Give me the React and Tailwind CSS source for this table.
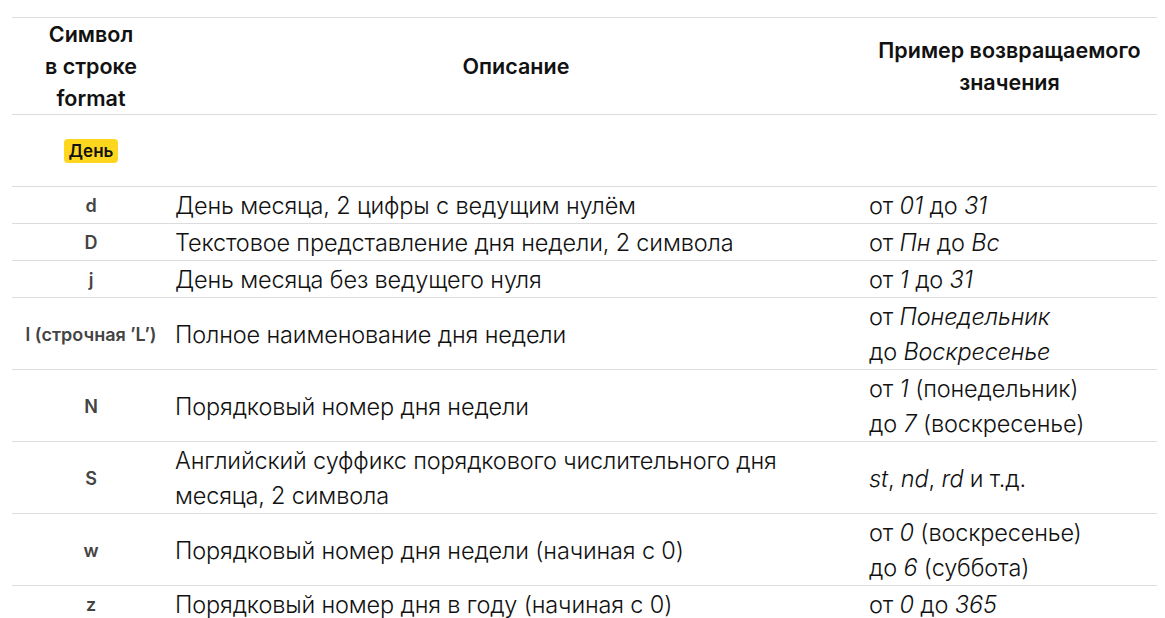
import React from 'react';

const rows = [
  { sym: 'd', desc: 'День месяца, 2 цифры с ведущим нулём', ex: [<>от <i>01</i> до <i>31</i></>] },
  { sym: 'D', desc: 'Текстовое представление дня недели, 2 символа', ex: [<>от <i>Пн</i> до <i>Вс</i></>] },
  { sym: 'j', desc: 'День месяца без ведущего нуля', ex: [<>от <i>1</i> до <i>31</i></>] },
  { sym: 'l (строчная ’L’)', desc: 'Полное наименование дня недели', ex: [<>от <i>Понедельник</i></>, <>до <i>Воскресенье</i></>] },
  { sym: 'N', desc: 'Порядковый номер дня недели', ex: [<>от <i>1</i> (понедельник)</>, <>до <i>7</i> (воскресенье)</>] },
  { sym: 'S', desc: 'Английский суффикс порядкового числительного дня месяца, 2 символа', ex: [<><i>st</i>, <i>nd</i>, <i>rd</i> и т.д.</>] },
  { sym: 'w', desc: 'Порядковый номер дня недели (начиная с 0)', ex: [<>от <i>0</i> (воскресенье)</>, <>до <i>6</i> (суббота)</>] },
  { sym: 'z', desc: 'Порядковый номер дня в году (начиная с 0)', ex: [<>от <i>0</i> до <i>365</i></>] },
];

export default function App() {
  return (
    <div className="bg-white min-h-screen pt-[17px] pl-[12px] font-['Inter',sans-serif]">
      <table className="w-[1145px] table-fixed border-collapse">
        <colgroup>
          <col className="w-[158px]" />
          <col className="w-[692px]" />
          <col className="w-[295px]" />
        </colgroup>
        <thead>
          <tr className="border-y border-[#dcdcdc]">
            <th className="h-[96px] text-[21.5px] leading-[32px] font-semibold text-[#111] text-center align-middle">
              Символ<br />в строке<br />format
            </th>
            <th className="text-[21.5px] leading-[32px] font-semibold text-[#111] text-center align-middle">Описание</th>
            <th className="text-[21.5px] leading-[32px] font-semibold text-[#111] text-center align-middle">
              Пример возвращаемого<br />значения
            </th>
          </tr>
        </thead>
        <tbody>
          <tr className="border-b border-[#dcdcdc]">
            <td className="h-[72px] text-center align-middle">
              <span className="inline-block bg-[#ffd61e] rounded-[4px] px-[5px] text-[17px] leading-[24px] font-semibold text-[#111]">День</span>
            </td>
            <td />
            <td />
          </tr>
          {rows.map((r) => (
            <tr key={r.sym} className="border-b border-[#dcdcdc]">
              <td className="pt-[1px] text-center align-middle text-[18px] font-semibold text-[#444] whitespace-nowrap">{r.sym}</td>
              <td className="px-[5px] pt-[1px] pb-0 align-middle text-[23.5px] leading-[35px] font-light text-[#111] tracking-[-0.15px]">{r.desc}</td>
              <td className="px-[7px] pt-[1px] pb-0 align-middle text-[23.5px] leading-[35px] font-light text-[#111] tracking-[-0.15px]">
                {r.ex.map((e, i) => (
                  <div key={i}>{e}</div>
                ))}
              </td>
            </tr>
          ))}
        </tbody>
      </table>
    </div>
  );
}
